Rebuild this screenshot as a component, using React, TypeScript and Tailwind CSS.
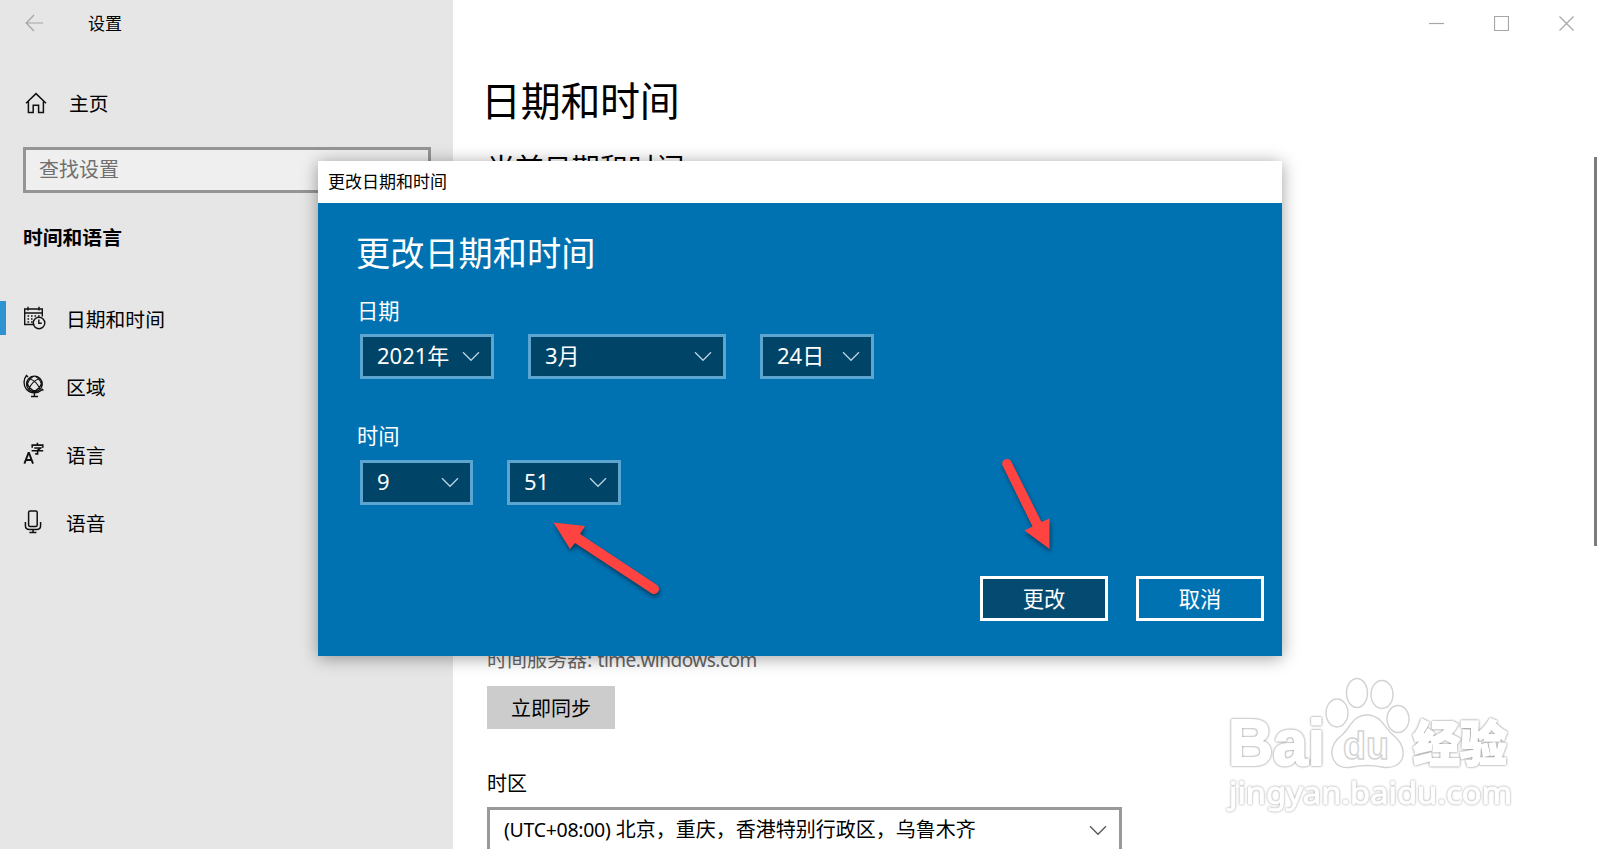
import type { ReactNode } from "react";
import clsx from "clsx";

const HomeIcon = () => (
  <svg width="22" height="22" viewBox="0 0 22 22" fill="none" stroke="#111" strokeWidth="1.5">
    <path d="M1 11.2 11 1.6l10 9.6M3.4 9.4v11h4.8v-7.2h5.4v7.2h4.8v-11" />
  </svg>
);

const CalendarClockIcon = () => (
  <svg width="24" height="24" viewBox="0 0 24 24" fill="none" stroke="#111" strokeWidth="1.4">
    <path d="M11.5 18.5H1.7V3h17.6v7.5M1.7 7h17.6M5 .8V4.6M16 .8V4.6" />
    <path d="M4.5 10h1.6M8 10h1.6M11.5 10h1.6M15 10h1.6M4.5 13h1.6M8 13h1.6M4.5 16h1.6M8 16h1.6" strokeWidth="1.5" />
    <circle cx="16" cy="17" r="5.8" />
    <path d="M15.8 13.4v3.9h3" />
  </svg>
);

const GlobeIcon = () => (
  <svg width="24" height="24" viewBox="0 0 24 24" fill="none" stroke="#111" strokeWidth="1.4">
    <circle cx="11.4" cy="9.9" r="7.8" />
    <path
      d="M6 4.500q8 2.500 10.800 10.800M16.800 4.500Q8.800 7 6 15.300M10.500 2.200Q5 5.500 4 12M12.300 2.200Q18 5.500 18.800 12M4 8q1.500 7 8 9.500M18.800 8q-1.500 7-8 9.500"
      strokeWidth="1.200"
    />
    <path d="M3.600 1.500C.4 4.800.1 11.300 3.400 15.200c4 4.500 11.300 4.600 15.800.6M18.600 14.700l1.800 1.800M3 1.100l2 2M11.400 18.800v3.500M8 22.500h7" />
  </svg>
);

const LanguageIcon = () => (
  <svg width="24" height="24" viewBox="0 0 24 24" fill="none" stroke="#111" strokeWidth="1.9">
    <path d="M1.400 21.600 5.500 11h.5l4 10.600M2.700 18h6" />
    <path d="M9.200 5.800V3.100h10.600v2.700M14.400.8v2.300M11.200 6h6.400l-3 2.300v3.600h-2.400M8.600 8.800h11.600" strokeWidth="1.600" />
  </svg>
);

const MicIcon = () => (
  <svg width="24" height="24" viewBox="0 0 24 24" fill="none" stroke="#111" strokeWidth="1.5">
    <rect x="5.600" y="1" width="8.600" height="15.500" rx="1.500" />
    <path d="M2.400 12v3.500q0 4 4 4h7.200q4 0 4-4V12M10 19.500v3M6.400 22.600h7" />
  </svg>
);

const Chevron = ({ className }: { className?: string }) => (
  <svg className={clsx("shrink-0", className)} width="18" height="11" viewBox="0 0 18 11" fill="none" stroke="currentColor" strokeWidth="1.300">
    <path d="m1 1.300 8 8 8-8" />
  </svg>
);

const navItems = [
  { icon: CalendarClockIcon, label: "日期和时间", active: true },
  { icon: GlobeIcon, label: "区域", active: false },
  { icon: LanguageIcon, label: "语言", active: false },
  { icon: MicIcon, label: "语音", active: false },
];

const dateFields = [
  { value: "2021年", width: "w-[134px]" },
  { value: "3月", width: "w-[198px]" },
  { value: "24日", width: "w-[114px]" },
];

const timeFields = [
  { value: "9", width: "w-[113px]" },
  { value: "51", width: "w-[114px]" },
];

const Dropdown = ({ value, width }: { value: string; width: string }) => (
  <button
    className={clsx(
      "flex h-[45px] items-center justify-between border-[3px] border-[#5ba5d0] bg-[#004467] pr-[11px] pl-[14px] text-[22px] leading-none",
      width
    )}
  >
    <span className="-mt-1">{value}</span>
    <Chevron className="text-[#b9d3e2]" />
  </button>
);

const DialogButton = ({ children, primary }: { children: ReactNode; primary?: boolean }) => (
  <button
    className={clsx(
      "h-[45px] w-[128px] border-[3px] border-white text-[21.300px] leading-none",
      primary ? "bg-[#054a70]" : "bg-[#0072b1]"
    )}
  >
    {children}
  </button>
);

const Sidebar = () => (
  <aside className="flex w-[453px] shrink-0 flex-col bg-[#e6e6e6]">
    <div className="flex h-[46px] items-center pl-[25px]">
      <svg width="18" height="18" viewBox="0 0 18 18" fill="none" stroke="#a3a3a3" strokeWidth="1.200">
        <path d="M18 9H1.500M9 1 1.200 9 9 17" />
      </svg>
      <span className="ml-[45px] text-[17px] leading-none">设置</span>
    </div>
    <div className="mt-[34px] flex h-[46px] items-center pl-[25px]">
      <HomeIcon />
      <span className="ml-[22px] pt-px text-[19.800px] leading-none">主页</span>
    </div>
    <div className="mt-[21px] ml-[23px] flex h-[46px] w-[408px] items-center border-[3px] border-[#959595] bg-[#efefef] pl-[13px] text-[20px] leading-none text-[#707070]">
      查找设置
    </div>
    <h2 className="mt-[35px] ml-[23px] text-[19.800px] leading-[20px] font-bold">时间和语言</h2>
    <nav className="mt-[36px]">
      {navItems.map((item) => (
        <div key={item.label} className="flex h-[68px] items-center">
          <span className={clsx("h-[34px] w-1.5", item.active && "bg-[#2f93d1]")} />
          <span className="ml-[17px]">
            <item.icon />
          </span>
          <span className="ml-[19px] pt-1 text-[19.800px] leading-none">{item.label}</span>
        </div>
      ))}
    </nav>
  </aside>
);

const WindowControls = () => (
  <div className="flex h-[46px] shrink-0 items-center justify-end gap-[50px] pr-[26px] text-[#a6a6a6]">
    {["M0 7.500h15", "M.5.500h14v14h-14z", "m.5.500 14 14m0-14-14 14"].map((d) => (
      <svg key={d} width="15" height="15" viewBox="0 0 15 15" fill="none" stroke="currentColor" strokeWidth="1.200">
        <path d={d} />
      </svg>
    ))}
  </div>
);

const Content = () => (
  <main className="flex flex-1 flex-col bg-white">
    <WindowControls />
    <div className="pl-[34px]">
      <h1 className="mt-[35px] -ml-[6px] text-[40px] leading-[40px] tracking-[-0.3px]">日期和时间</h1>
      <h2 className="mt-[32px] text-[28.200px] leading-[30px]">当前日期和时间</h2>
      <p className="mt-[467px] text-[20px] leading-[20px] text-[#666]">
        时间服务器: <span className="text-[19px] tracking-[-0.5px]">time.windows.com</span>
      </p>
      <button className="mt-[16px] h-[43px] w-[128px] bg-[#ccc] pt-0.5 text-[20px] leading-none">立即同步</button>
      <p className="mt-[45px] text-[20px] leading-[20px]">时区</p>
      <div className="mt-[13px] flex h-[46px] w-[635px] items-center justify-between border-[3px] border-[#999] pr-[12px] pl-[14px] text-[20px] leading-none">
        <span>
          <span className="text-[19.500px] tracking-[-0.3px]">(UTC+08:00)</span> 北京，重庆，香港特别行政区，乌鲁木齐
        </span>
        <Chevron className="text-[#555]" />
      </div>
    </div>
  </main>
);

const ChangeDialog = () => (
  <div className="absolute top-[161px] left-[318px] flex h-[495px] w-[964px] flex-col bg-[#0072b1] text-white shadow-[0_2px_16px_rgba(0,0,0,0.38)]">
    <div className="flex h-[42px] items-center bg-white pb-px pl-[10px] text-[17px] leading-none text-black">更改日期和时间</div>
    <div className="flex flex-1 flex-col pl-[39px]">
      <h2 className="mt-[33px] -ml-px text-[34.200px] leading-[34px]">更改日期和时间</h2>
      <p className="mt-[30px] text-[21.300px] leading-[22px]">日期</p>
      <div className="mt-[12px] ml-[3px] flex gap-[34px]">
        {dateFields.map((field) => (
          <Dropdown key={field.value} {...field} />
        ))}
      </div>
      <p className="mt-[46px] text-[21.300px] leading-[22px]">时间</p>
      <div className="mt-[13px] ml-[3px] flex gap-[34px]">
        {timeFields.map((field) => (
          <Dropdown key={field.value} {...field} />
        ))}
      </div>
      <div className="mt-auto mr-[18px] mb-[35px] flex justify-end gap-[28px]">
        <DialogButton primary>更改</DialogButton>
        <DialogButton>取消</DialogButton>
      </div>
    </div>
  </div>
);

// Red pointers drawn over the dialog
const Arrows = () => (
  <svg
    className="pointer-events-none absolute top-0 left-0 drop-shadow-[1px_3px_2px_rgba(0,0,0,0.45)]"
    width="1600"
    height="849"
    viewBox="0 0 1600 849"
    fill="#ff4340"
  >
    <path d="m553.500 522.500 31.500 3.500-5 8 77 51a5 5 0 0 1-6 8l-76-50-5 6Z" />
    <path d="M1049.500 549v-30.500l-8 3.500-30-60a4.500 4.500 0 0 0-9 3.500l30 61-8 4Z" />
  </svg>
);

// White letters with a faint grey rim
const Watermark = () => (
  <svg
    className="pointer-events-none absolute top-[670px] left-[1220px]"
    width="300"
    height="150"
    viewBox="0 0 300 150"
    fill="#fff"
    stroke="#d2d2d2"
    strokeWidth="1.400"
    fontFamily='"Liberation Sans", "Noto Sans CJK SC", sans-serif'
  >
    <g fontWeight="bold" stroke="#fff" strokeWidth="2" strokeLinejoin="round" className="[filter:drop-shadow(0_0_1px_#777)]">
      <text x="8" y="95" fontSize="64" textLength="97" lengthAdjust="spacingAndGlyphs">Bai</text>
      <text x="193" y="91" fontSize="48" fontWeight="900" textLength="94" lengthAdjust="spacingAndGlyphs">经验</text>
    </g>
    <ellipse cx="117" cy="43" rx="11" ry="14" />
    <ellipse cx="137" cy="23" rx="10.500" ry="14.500" />
    <ellipse cx="162" cy="24.500" rx="11" ry="14" />
    <ellipse cx="178" cy="49" rx="11" ry="13.500" />
    <path d="M147 45c-14 0-17 13-25 20-8 6-11 12-10 20 2 11 11 14 20 12q15-3 30 0c10 2 20-2 21-12 1-9-4-15-11-21-8-7-11-19-25-19Z" />
    <text x="123" y="89" fontSize="38" textLength="46" lengthAdjust="spacingAndGlyphs" fontWeight="bold">du</text>
    <text
      x="9"
      y="134"
      fontSize="30"
      stroke="#fff"
      strokeWidth="1"
      className="[filter:drop-shadow(0_0_1px_#999)]"
      fontFamily='"Noto Sans", sans-serif'
      textLength="283"
      lengthAdjust="spacingAndGlyphs"
    >
      jingyan.baidu.com
    </text>
  </svg>
);

const App = () => (
  <div className="relative flex h-[849px] w-[1600px] overflow-hidden bg-white font-['Noto_Sans','Noto_Sans_CJK_SC',sans-serif] text-black">
    <Sidebar />
    <Content />
    <div className="absolute top-[157px] left-[1594px] h-[389px] w-[3px] bg-[#7c7c7c]" />
    <ChangeDialog />
    <Arrows />
    <Watermark />
  </div>
);

export default App;
